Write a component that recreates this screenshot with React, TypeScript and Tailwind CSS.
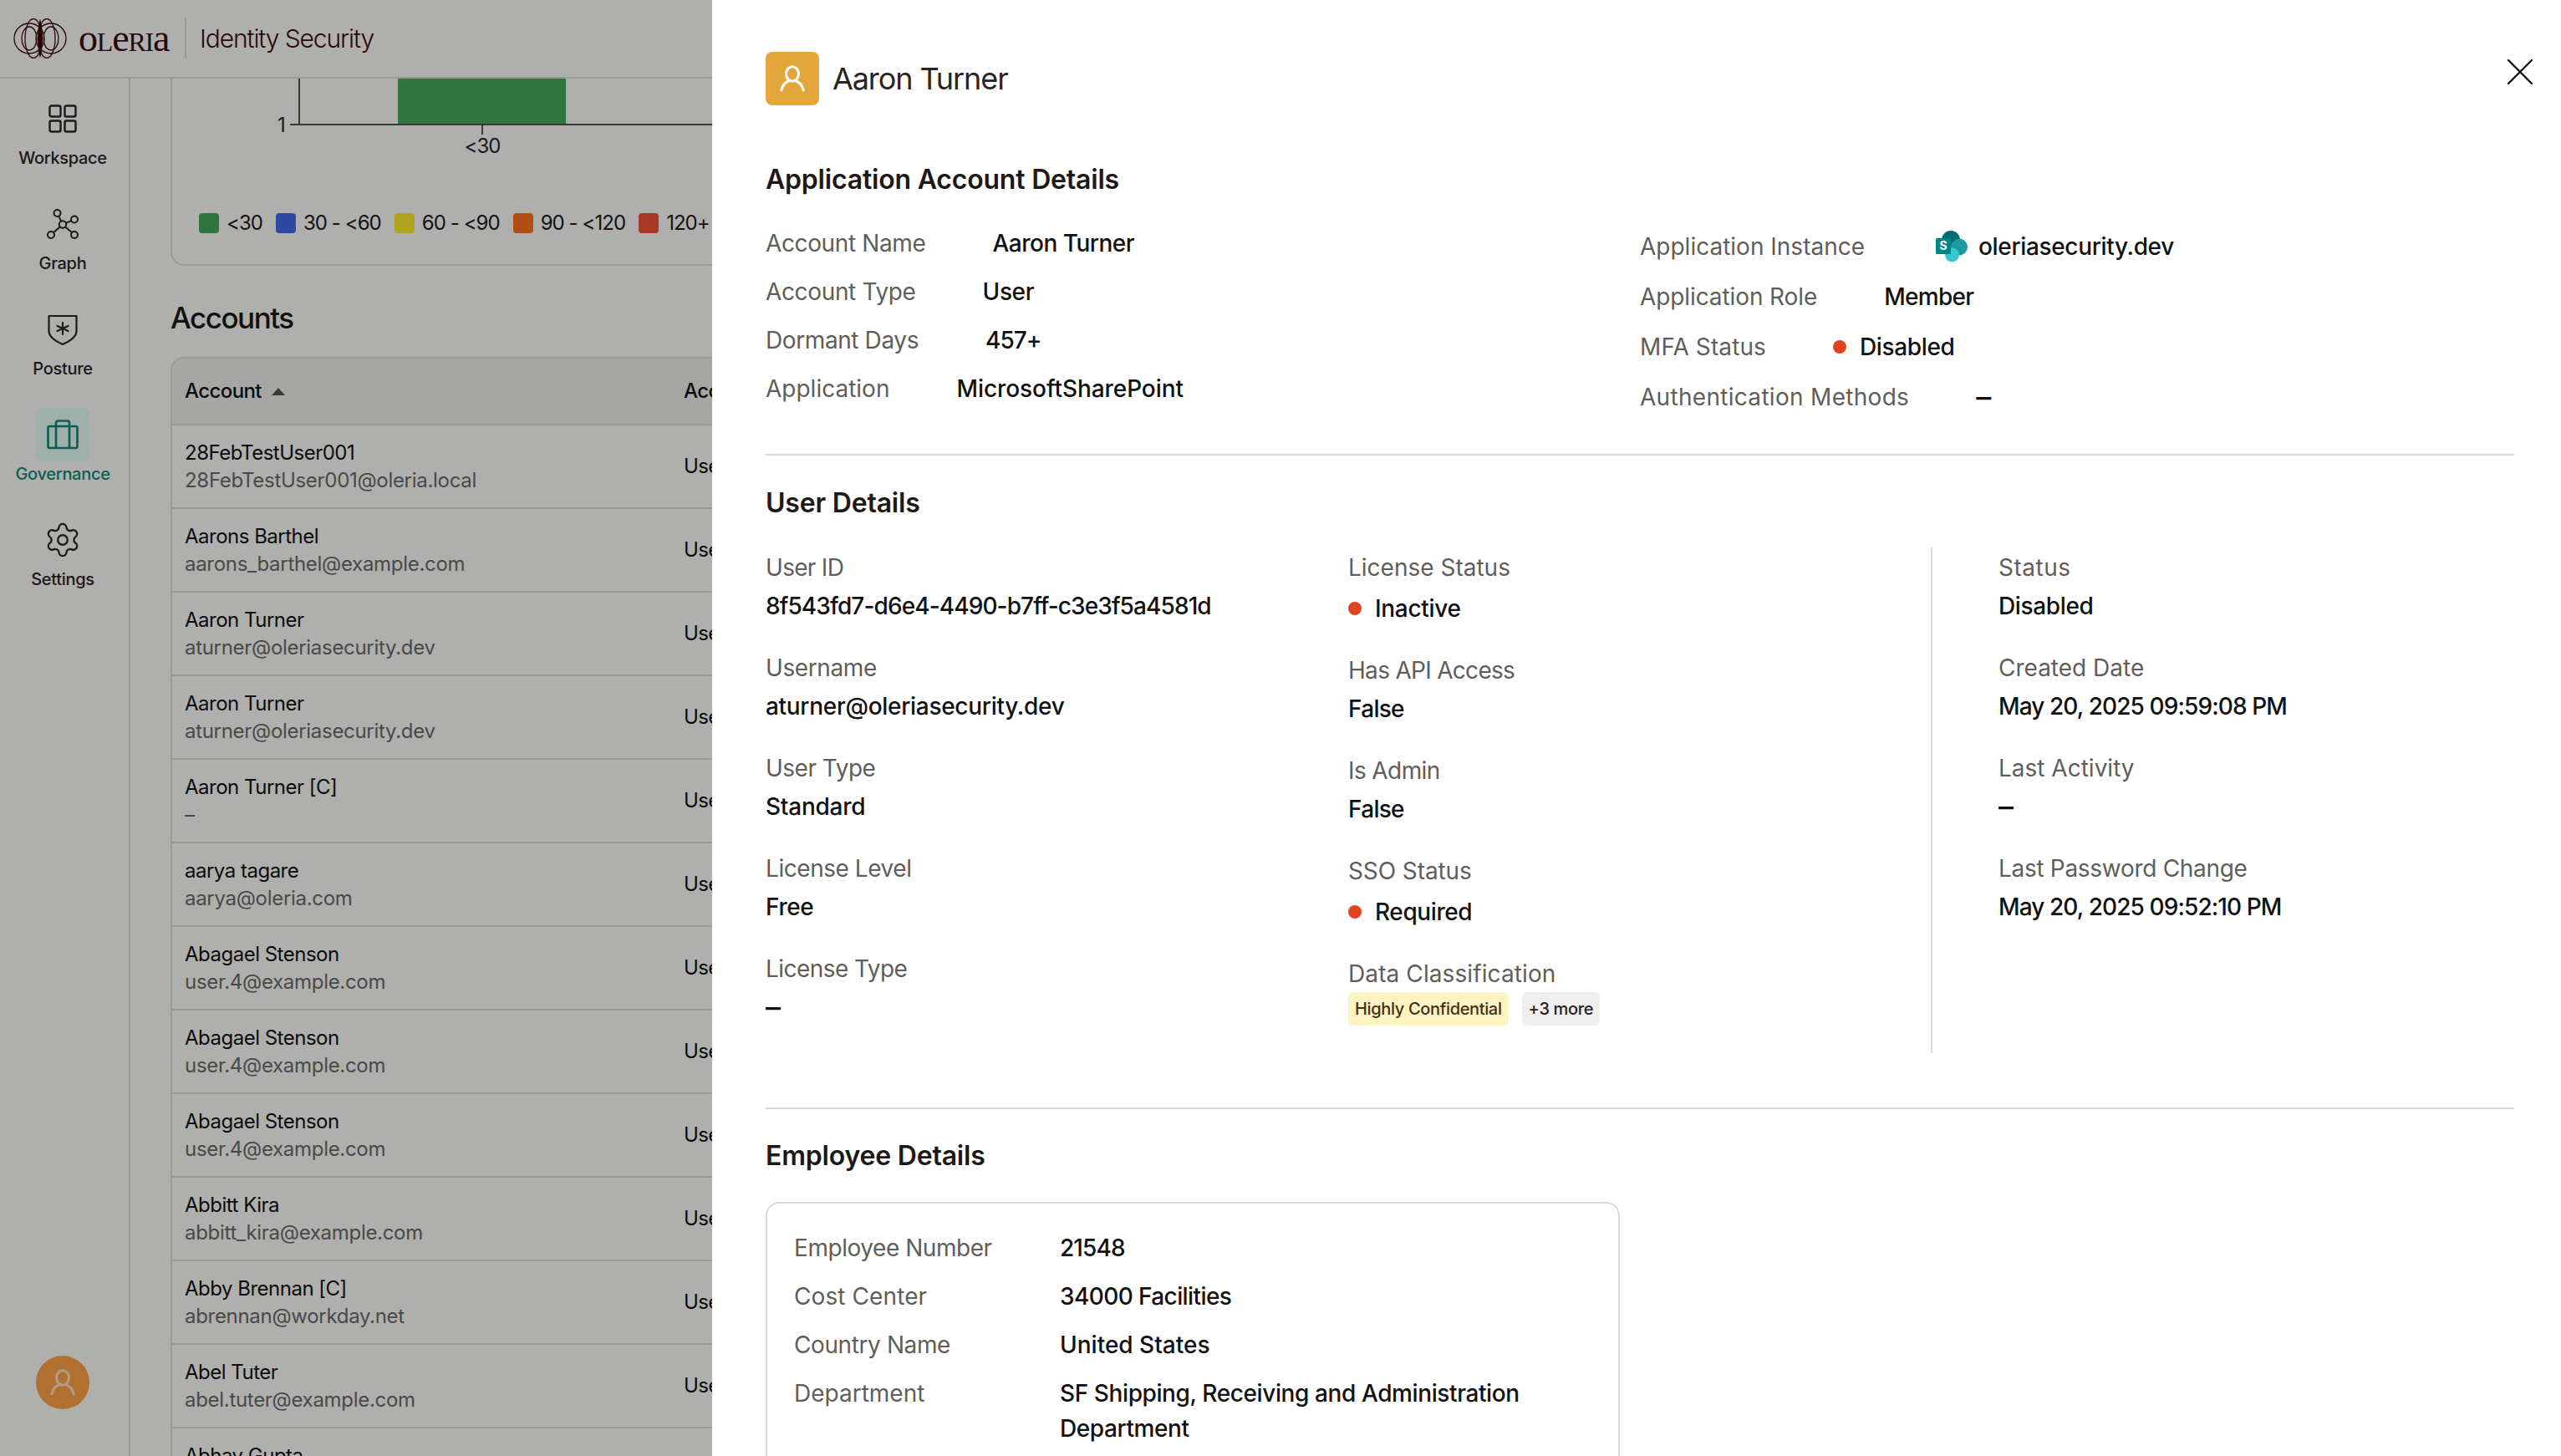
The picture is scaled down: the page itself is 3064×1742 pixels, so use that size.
import React from 'react';
import { Settings } from 'lucide-react';

const font = { fontFamily: 'Inter, "Noto Sans", sans-serif' };

const accounts = [
  ['28FebTestUser001', '28FebTestUser001@oleria.local'],
  ['Aarons Barthel', 'aarons_barthel@example.com'],
  ['Aaron Turner', 'aturner@oleriasecurity.dev'],
  ['Aaron Turner', 'aturner@oleriasecurity.dev'],
  ['Aaron Turner [C]', '–'],
  ['aarya tagare', 'aarya@oleria.com'],
  ['Abagael Stenson', 'user.4@example.com'],
  ['Abagael Stenson', 'user.4@example.com'],
  ['Abagael Stenson', 'user.4@example.com'],
  ['Abbitt Kira', 'abbitt_kira@example.com'],
  ['Abby Brennan [C]', 'abrennan@workday.net'],
  ['Abel Tuter', 'abel.tuter@example.com'],
  ['Abhay Gupta', 'abhay.gupta@example.com'],
];

const legend = [
  ['<30', 'bg-[#48aa5b]'],
  ['30 - <60', 'bg-[#446bec]'],
  ['60 - <90', 'bg-[#ffee2e]'],
  ['90 - <120', 'bg-[#ff721d]'],
  ['120+', 'bg-[#f25137]'],
];

function PersonIcon({ className }: { className?: string }) {
  return (
    <svg viewBox="0 0 32 32" fill="none" stroke="currentColor" strokeWidth="2.4" strokeLinecap="round" className={className}>
      <ellipse cx="16" cy="11.5" rx="6" ry="7" />
      <path d="M13 18 C 9 19.5 6.5 23 5.5 27" />
      <path d="M19 18 C 23 19.5 25.5 23 26.5 27" />
    </svg>
  );
}

function WorkspaceIcon() {
  return (
    <svg viewBox="0 0 34 34" fill="none" stroke="currentColor" strokeWidth="2.4" className="w-[34px] h-[34px]">
      <rect x="1.5" y="1.5" width="13" height="13" rx="2" />
      <rect x="19.5" y="1.5" width="13" height="13" rx="2" />
      <rect x="1.5" y="19.5" width="13" height="13" rx="2" />
      <rect x="19.5" y="19.5" width="13" height="13" rx="2" />
    </svg>
  );
}

function GraphIcon() {
  return (
    <svg viewBox="0 0 40 38" fill="none" stroke="currentColor" strokeWidth="2" className="w-[40px] h-[38px]">
      <circle cx="13.5" cy="6" r="4" />
      <circle cx="20" cy="19.5" r="4.2" />
      <circle cx="34" cy="13.5" r="4" />
      <circle cx="34" cy="32" r="4" />
      <circle cx="6" cy="32" r="4" />
      <path d="M15.2 9.6 L18.2 15.8 M23.9 17.9 L30.3 15.1 M23 22.5 L31 29 M16.9 22.3 L9 29.3" />
    </svg>
  );
}

function PostureIcon() {
  return (
    <svg viewBox="0 0 36 38" fill="none" stroke="currentColor" strokeWidth="2.2" strokeLinecap="round" className="w-[36px] h-[38px]">
      <path d="M1.5 3 H34.5 V21 C34.5 28 27 33 18 37 C9 33 1.5 28 1.5 21 Z" strokeLinejoin="round" />
      <path d="M18 11 V25 M11.5 15 L24.5 21 M24.5 15 L11.5 21" />
    </svg>
  );
}

function GovernanceIcon() {
  return (
    <svg viewBox="0 0 38 36" fill="none" stroke="currentColor" strokeWidth="2.6" className="w-[38px] h-[36px]">
      <rect x="1.5" y="8" width="35" height="26" rx="2" />
      <path d="M11 8 V34 M27 8 V34 M11 8 V4 C11 2.5 12 1.5 13.5 1.5 H24.5 C26 1.5 27 2.5 27 4 V8" />
    </svg>
  );
}

function OleriaMark() {
  return (
    <svg viewBox="0 0 64 48" fill="none" stroke="#3c0b0b" strokeWidth="1.3" className="w-[64px] h-[48px]">
      <circle cx="19" cy="24" r="18" />
      <circle cx="45" cy="24" r="18" />
      <ellipse cx="19" cy="24" rx="9" ry="14" />
      <ellipse cx="45" cy="24" rx="9" ry="14" />
      <ellipse cx="24" cy="24" rx="10" ry="23.5" />
      <ellipse cx="40" cy="24" rx="10" ry="23.5" />
      <path d="M32 3 C 29 14 29 34 32 45 C 35 34 35 14 32 3 Z" fill="#3c0b0b" />
    </svg>
  );
}

function SharePointLogo() {
  return (
    <svg viewBox="0 0 38 38" className="w-[38px] h-[38px] shrink-0">
      <circle cx="18" cy="11" r="11" fill="#036c70" />
      <circle cx="28" cy="19.5" r="10" fill="#1a9ba1" />
      <circle cx="19.5" cy="29" r="8.5" fill="#37c6d0" />
      <rect x="0" y="9" width="18" height="19" rx="1.5" fill="#038387" />
      <text x="9" y="23" textAnchor="middle" fontSize="14" fontWeight="700" fill="#fff" fontFamily="Inter, sans-serif">S</text>
    </svg>
  );
}

function NavItem({ label, icon, active }: { label: string; icon: React.ReactNode; active?: boolean }) {
  return (
    <div className="flex flex-col items-center">
      <div className={`w-16 h-16 rounded-lg flex items-center justify-center ${active ? 'bg-[#e6fff6] text-[#138874]' : 'text-[#292524]'}`}>
        {icon}
      </div>
      <span className={`h-[30px] leading-[30px] text-[20px] font-medium tracking-[-0.3px] ${active ? 'text-[#138874]' : 'text-[#292524]'}`}>
        {label}
      </span>
    </div>
  );
}

function InlineRow({ label, labelClass, valueClass, children }: { label: string; labelClass?: string; valueClass?: string; children: React.ReactNode }) {
  return (
    <div className="flex items-center gap-[80px] h-10 leading-10 text-[28px]">
      <span className={`text-[#5f5e5a] ${labelClass}`}>{label}</span>
      <span className={`flex items-center text-[#111] font-medium ${valueClass}`}>{children}</span>
    </div>
  );
}

function Dot() {
  return <span className="w-4 h-4 rounded-full bg-[#e04423] shrink-0" />;
}

function Dash() {
  return <span className="text-[36px] text-[#111]">–</span>;
}

function Field({ label, value, dot, labelClass, valueClass }: { label: string; value: React.ReactNode; dot?: boolean; labelClass?: string; valueClass?: string }) {
  return (
    <div className="text-[28px] leading-10">
      <div className={`h-10 text-[#5f5e5a] ${labelClass}`}>{label}</div>
      {dot ? (
        <div className="flex items-center gap-4 h-10 mt-[9px] text-[#111] font-medium">
          <Dot />
          <span className={valueClass}>{value}</span>
        </div>
      ) : (
        <div className={`h-10 mt-[6px] text-[#111] font-medium ${valueClass}`}>{value}</div>
      )}
    </div>
  );
}

function SectionTitle({ children }: { children: React.ReactNode }) {
  return <h2 className="h-10 leading-10 text-[32px] font-semibold tracking-[-0.2px] text-[#1c1917]">{children}</h2>;
}

function EmployeeRow({ label, labelClass, valueClass, children }: { label: string; labelClass?: string; valueClass?: string; children: React.ReactNode }) {
  return (
    <div className="grid grid-cols-[318px_1fr] text-[28px] leading-[42px]">
      <span className={`text-[#5f5e5a] ${labelClass}`}>{label}</span>
      <span className={`text-[#111] font-medium ${valueClass}`}>{children}</span>
    </div>
  );
}

export default function App() {
  return (
    <div style={font} className="relative w-[3064px] h-[1742px] overflow-hidden bg-[#fefefc]">
      {/* App underneath */}
      <div className="flex items-center h-[94px] border-b-2 border-[#dfdfd8]">
        <div className="ml-4"><OleriaMark /></div>
        <span className="ml-[14px] w-[107px] flex items-baseline text-[#3c0b0b] leading-none tracking-[-1.2px]" style={{ fontFamily: '"Liberation Serif", serif' }}>
          <span className="text-[46px]">o</span>
          <span className="text-[32px]">L</span>
          <span className="text-[46px]">e</span>
          <span className="text-[32px]">RI</span>
          <span className="text-[46px]">a</span>
        </span>
        <div className="ml-5 w-[2px] h-12 bg-[#dfdfd8]" />
        <span className="ml-[16px] text-[30px] font-light text-[#3c0b0b] tracking-[-1.1px]">Identity Security</span>
      </div>

      <div className="flex h-[1648px]">
        <aside className="w-[156px] shrink-0 border-r-2 border-[#dfdfd8] flex flex-col justify-between pt-4 pb-[56px] pr-1">
          <div className="flex flex-col gap-8">
            <NavItem label="Workspace" icon={<WorkspaceIcon />} />
            <NavItem label="Graph" icon={<GraphIcon />} />
            <NavItem label="Posture" icon={<PostureIcon />} />
            <NavItem label="Governance" icon={<GovernanceIcon />} active />
            <NavItem label="Settings" icon={<Settings size={46} strokeWidth={1.2} />} />
          </div>
          <div className="mx-auto w-16 h-16 rounded-full bg-[#ffa246] text-[#fff] flex items-center justify-center">
            <PersonIcon className="w-10 h-10 opacity-70" />
          </div>
        </aside>

        <main className="flex-1 min-w-0 pl-[48px]">
          {/* Chart card, scrolled under the header */}
          <div className="h-[224px] border-2 border-t-0 border-[#dfdfd8] rounded-b-2xl">
            <svg width="800" height="96" className="block">
              <rect x="270" y="0" width="201" height="55" fill="#48aa5b" />
              <path d="M152 0 V56 M141 55 H800 M371 56 V67" stroke="#57534e" strokeWidth="2" fill="none" />
              <text x="131" y="64" textAnchor="middle" fontSize="24" fill="#292524" fontFamily="Inter, sans-serif">1</text>
              <text x="371" y="89" textAnchor="middle" fontSize="24" letterSpacing="-1" fill="#292524" fontFamily="Inter, sans-serif">&lt;30</text>
            </svg>
            <div className="flex gap-4 pl-[32px] mt-[62px] w-[1000px]">
              {legend.map(([label, color]) => (
                <div key={label} className="flex items-center gap-[9px] h-[30px]">
                  <span className={`w-6 h-6 rounded ${color}`} />
                  <span className="text-[24px] text-[#1c1917] tracking-[-0.95px] whitespace-nowrap">{label}</span>
                </div>
              ))}
            </div>
          </div>

          <h2 className="mt-[42px] h-10 leading-10 text-[35px] font-medium tracking-[-1.5px] text-[#1c1917]">Accounts</h2>

          <div className="mt-[27px] border-2 border-[#dfdfd8] rounded-t-2xl overflow-hidden">
            <div className="flex items-center h-[80px] bg-[#f1f1ef] border-b-2 border-[#dfdfd8] text-[24px] font-medium tracking-[-0.6px] text-[#111]">
              <div className="w-[612px] pl-[15px] flex items-center gap-3">
                Account
                <span className="w-0 h-0 border-l-[8px] border-r-[8px] border-b-[9px] border-l-transparent border-r-transparent border-b-[#57534e]" />
              </div>
              <div>Account Type</div>
            </div>
            {accounts.map(([name, email], i) => (
              <div key={i} className="flex items-center h-[100px] border-b-2 border-[#dfdfd8] text-[24px]">
                <div className="w-[612px] pl-[15px] leading-[33px]">
                  <div className="text-[#111] tracking-[-0.5px]">{name}</div>
                  <div className="text-[#6b6b68] tracking-[-0.3px]">{email}</div>
                </div>
                <div className="text-[#111] tracking-[-0.6px]">User</div>
              </div>
            ))}
          </div>
        </main>
      </div>

      {/* Overlay and drawer */}
      <div className="absolute inset-0 bg-[#000]/[.31]" />
      <div className="absolute top-0 right-0 bottom-0 w-[2212px] bg-white overflow-hidden pl-16 pr-14 pt-[62px]">
        <svg viewBox="0 0 30 30" className="absolute top-[71px] right-[34px] w-[30px] h-[30px]" fill="none" stroke="#111" strokeWidth="2.4" strokeLinecap="round">
          <path d="M1 1 L29 29 M29 1 L1 29" />
        </svg>

        <div className="flex items-center gap-4">
          <div className="w-16 h-16 rounded-lg bg-[#e3a63b] text-white flex items-center justify-center">
            <PersonIcon className="w-10 h-10" />
          </div>
          <h1 className="text-[36px] tracking-[-1.1px] text-[#292524]">Aaron Turner</h1>
        </div>

        <div className="mt-[69px]">
          <SectionTitle>Application Account Details</SectionTitle>
        </div>

        <div className="grid grid-cols-[1046px_1fr] mt-[36px]">
          <div className="flex flex-col gap-[18px]">
            <InlineRow label="Account Name" labelClass="tracking-[-0.37px]" valueClass="tracking-[-0.5px]">Aaron Turner</InlineRow>
            <InlineRow label="Account Type" labelClass="tracking-[-0.35px]" valueClass="tracking-[-0.4px]">User</InlineRow>
            <InlineRow label="Dormant Days" labelClass="tracking-[-0.4px]" valueClass="tracking-[-1px]">457+</InlineRow>
            <InlineRow label="Application" labelClass="tracking-[0px]" valueClass="tracking-[-0.07px]">MicrosoftSharePoint</InlineRow>
          </div>
          <div className="flex flex-col gap-5 mt-[4px]">
            <InlineRow label="Application Instance" labelClass="tracking-[0px]" valueClass="tracking-[-0.35px]">
              <span className="flex items-center gap-[13px] ml-[5px]">
                <SharePointLogo />
                oleriasecurity.dev
              </span>
            </InlineRow>
            <InlineRow label="Application Role" labelClass="tracking-[-0.1px]" valueClass="tracking-[-0.7px]">Member</InlineRow>
            <InlineRow label="MFA Status" labelClass="tracking-[0.1px]" valueClass="tracking-[-0.35px]">
              <span className="flex items-center gap-4"><Dot />Disabled</span>
            </InlineRow>
            <InlineRow label="Authentication Methods" labelClass="tracking-[0.3px]"><Dash /></InlineRow>
          </div>
        </div>

        <div className="mt-[48px] h-[2px] bg-[#dadad8]" />

        <div className="mt-[37px]">
          <SectionTitle>User Details</SectionTitle>
        </div>

        <div className="grid grid-cols-[697px_697px_1fr] mt-[33px] h-[605px]">
          <div className="flex flex-col gap-[34px] pt-1">
            <Field label="User ID" labelClass="tracking-[-0.7px]" valueClass="tracking-[-0.9px]" value="8f543fd7-d6e4-4490-b7ff-c3e3f5a4581d" />
            <Field label="Username" labelClass="tracking-[-0.4px]" valueClass="tracking-[-0.3px]" value="aturner@oleriasecurity.dev" />
            <Field label="User Type" labelClass="tracking-[-0.5px]" valueClass="tracking-[-0.25px]" value="Standard" />
            <Field label="License Level" labelClass="tracking-[-0.45px]" valueClass="tracking-[-0.4px]" value="Free" />
            <Field label="License Type" labelClass="tracking-[-0.55px]" value={<Dash />} />
          </div>
          <div className="flex flex-col gap-[34px] pt-1">
            <Field label="License Status" labelClass="tracking-[0px]" valueClass="tracking-[-0.3px]" value="Inactive" dot />
            <Field label="Has API Access" labelClass="tracking-[-0.7px]" valueClass="tracking-[-0.7px]" value="False" />
            <Field label="Is Admin" labelClass="tracking-[-0.6px]" valueClass="tracking-[-0.7px]" value="False" />
            <Field label="SSO Status" labelClass="tracking-[-0.1px]" valueClass="tracking-[-0.4px]" value="Required" dot />
            <div>
              <div className="h-10 leading-10 text-[28px] tracking-[0.1px] text-[#5f5e5a]">Data Classification</div>
              <div className="flex gap-4 mt-[2px] text-[20px] font-medium tracking-[-0.35px]">
                <span className="h-10 leading-10 px-2 rounded-md bg-[#fdf4c3] text-[#4a2c17]">Highly Confidential</span>
                <span className="h-10 leading-10 px-2 rounded-md bg-[#f0efee] text-[#222]">+3 more</span>
              </div>
            </div>
          </div>
          <div className="flex flex-col gap-[34px] pt-1 pl-[79px] border-l-2 border-[#dadad8]">
            <Field label="Status" labelClass="tracking-[0.5px]" valueClass="tracking-[-0.35px]" value="Disabled" />
            <Field label="Created Date" labelClass="tracking-[0px]" valueClass="tracking-[-0.9px]" value="May 20, 2025 09:59:08 PM" />
            <Field label="Last Activity" labelClass="tracking-[0px]" value={<Dash />} />
            <Field label="Last Password Change" labelClass="tracking-[-0.3px]" valueClass="tracking-[-0.9px]" value="May 20, 2025 09:52:10 PM" />
          </div>
        </div>

        <div className="mt-[65px] h-[2px] bg-[#dadad8]" />

        <div className="mt-[36px]">
          <SectionTitle>Employee Details</SectionTitle>
        </div>

        <div className="mt-[35px] w-[1022px] border-2 border-[#dadad8] rounded-2xl pl-8 pr-8 pt-[32px] pb-8 flex flex-col gap-[16px]">
          <EmployeeRow label="Employee Number" labelClass="tracking-[-0.45px]" valueClass="tracking-[-0.9px]">21548</EmployeeRow>
          <EmployeeRow label="Cost Center" labelClass="tracking-[0.1px]" valueClass="tracking-[-0.6px]">34000 Facilities</EmployeeRow>
          <EmployeeRow label="Country Name" labelClass="tracking-[-0.4px]" valueClass="tracking-[0px]">United States</EmployeeRow>
          <EmployeeRow label="Department" labelClass="tracking-[0px]" valueClass="tracking-[-0.4px]">SF Shipping, Receiving and Administration Department</EmployeeRow>
        </div>
      </div>
    </div>
  );
}
